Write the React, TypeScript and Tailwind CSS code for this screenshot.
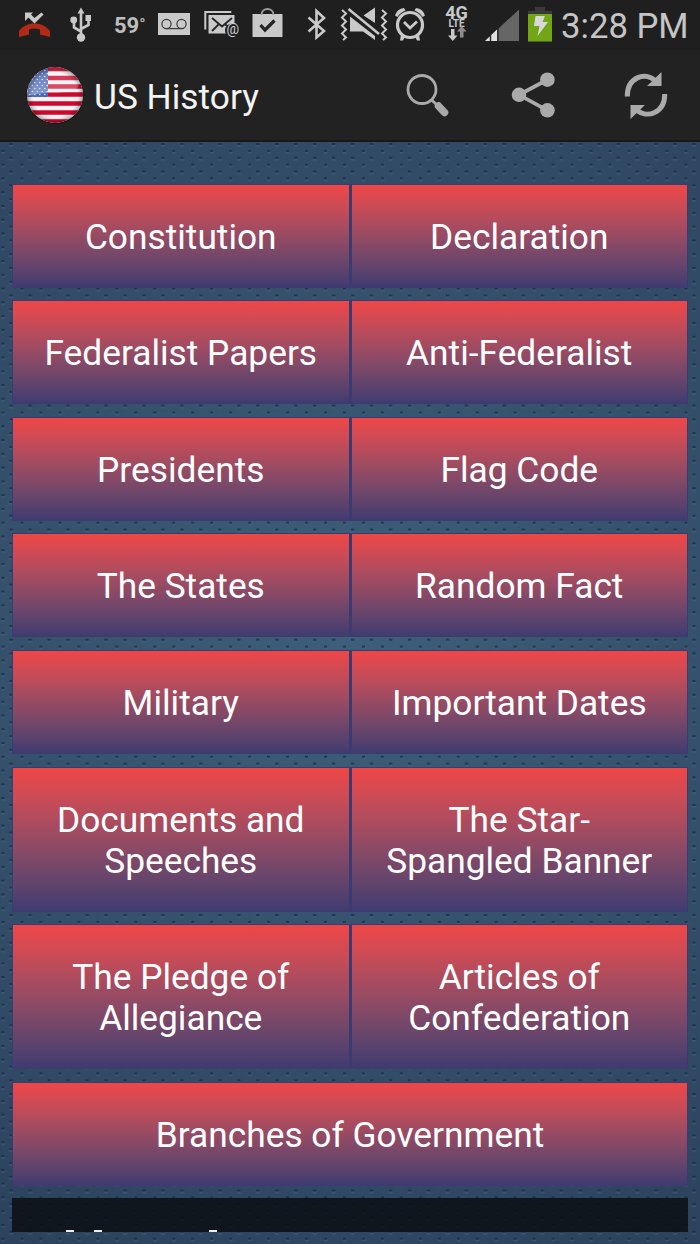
import React from 'react';

const ROWS = [
  { labels: ['Constitution', 'Declaration'], size: 'h-[104px] mb-[12px]' },
  { labels: ['Federalist Papers', 'Anti-Federalist'], size: 'h-[104px] mb-[13px]' },
  { labels: ['Presidents', 'Flag Code'], size: 'h-[104px] mb-[12px]' },
  { labels: ['The States', 'Random Fact'], size: 'h-[104px] mb-[13px]' },
  { labels: ['Military', 'Important Dates'], size: 'h-[104px] mb-[13px]' },
  { labels: ['Documents and\nSpeeches', 'The Star-\nSpangled Banner'], size: 'h-[145px] mb-[12px]' },
  { labels: ['The Pledge of\nAllegiance', 'Articles of\nConfederation'], size: 'h-[145px] mb-[13px]' },
  { labels: ['Branches of Government'], size: 'h-[104px] mb-[12px]' },
];

const StatusBar: React.FC = () => (
  <div className="h-[50px] bg-[#1f1f1f] flex pl-[16px] text-[#c5c5c5]">
    {/* missed call, usb */}
    <svg className="shrink-0" width="98" height="50" viewBox="16 0 98 50" fill="#c9c9c9">
      <path d="M19 37v-6c4-5 9-7.500 15.500-7.500s11.500 2.500 15.500 7.500v6l-10-2.500v-5q-5.500-2-11 0v5z" fill="#b22a17" />
      <path d="M25 12.500h8l-2 2 3.500 3.500 7-5.500 2 2-9 9-6-6-3.500 3.500z" />
      <path d="M81 12v25M81 31.500l-7-4v-8M81 29l7.500-4v-7" fill="none" stroke="#c9c9c9" strokeWidth="2.600" />
      <path d="M81 7.500l3.500 6h-7zM85.500 15h5.500v6h-5.500z" />
      <circle cx="73.700" cy="20" r="3.400" />
      <circle cx="81" cy="37.500" r="4.200" />
    </svg>
    <span className="w-[42px] shrink-0 pt-[13px] font-bold text-[22px] leading-[25px] text-[#bebebe] whitespace-nowrap">
      59<span className="text-[17px] leading-none font-normal align-[3px]">°</span>
    </span>
    {/* voicemail, mail */}
    <div className="relative shrink-0">
      <svg width="92" height="50" viewBox="156 0 92 50" fill="#c9c9c9">
        <rect x="158" y="13" width="32" height="22" />
        <g fill="none" stroke="#3a3a3a" strokeWidth="1.200">
          <circle cx="166.500" cy="24" r="4.600" />
          <circle cx="181.500" cy="24" r="4.600" />
          <path d="M166.500 28.600h15" />
        </g>
        <path d="M205.300 29.500v-17.500h26" fill="none" stroke="#c9c9c9" strokeWidth="2" />
        <path d="M208.500 15h26v18.500h-26z" />
        <path d="M212 18l10 8.500 10-8.500M212 31l7-7M225 24l5 5" fill="none" stroke="#252525" strokeWidth="1.800" />
        <circle cx="232" cy="30.500" r="7" fill="#1f1f1f" />
      </svg>
      <span className="absolute right-[9px] top-[21px] text-[14px] leading-[16px] text-[#d0d0d0]">@</span>
    </div>
    {/* store bag, bluetooth, muted, alarm */}
    <svg className="shrink-0" width="195" height="50" viewBox="248 0 195 50" fill="#c9c9c9">
      <path d="M252.500 14h30v23h-30z" />
      <path d="M261.500 15c0-8 12-8 12 0" fill="none" stroke="#9c9c9c" strokeWidth="2" />
      <path d="M260.500 25l4.500 5 9.500-9.500" fill="none" stroke="#252525" strokeWidth="3.300" />
      <path d="M308.500 17.500L324 31l-7.500 6.500V11l7.500 7L308.500 31.500" fill="none" stroke="#c9c9c9" strokeWidth="2.600" />
      <path d="M350 16.500l25 19.500v4l-12-8.500h-13zM363.500 15.500L375 7.500v15.500z" />
      <path d="M348.500 9L379 34" stroke="#c9c9c9" strokeWidth="2.500" />
      <path d="M342 10l4 3.500-4 4 4 4-4 4 4 4-4 4 4 4-3 2.500M382 10l4 3.500-4 4 4 4-4 4 4 4-4 4 4 4-3 2.500" fill="none" stroke="#c9c9c9" strokeWidth="2" />
      <circle cx="410" cy="25" r="12.500" fill="none" stroke="#c9c9c9" strokeWidth="3.200" />
      <path d="M404 22l6 6 7-6.500" fill="none" stroke="#c9c9c9" strokeWidth="2.800" />
      <path d="M395 15.500q2-7 9-7.500l1.500 2.500q-5.500 2-8 6.500zM425 15.500q-2-7-9-7.500l-1.500 2.500q5.500 2 8 6.500zM401 34.500l4 2-2 4h-3zM419 34.500l-4 2 2 4h3z" />
    </svg>
    <div className="w-[27px] shrink-0 flex flex-col items-center pt-[6px] font-bold text-[#c9c9c9]">
      <span className="text-[18px] leading-[14px]">4G</span>
      <span className="text-[10px] leading-[7px]">LTE</span>
      <svg className="-mt-px" width="20" height="16" viewBox="446 26 20 16" fill="#c9c9c9">
        <path d="M450 29h3.500v6.500h3l-4.700 5.500-4.800-5.500h3z" />
        <path d="M459 37.500v-6h-3l4.700-5.500 4.800 5.500h-3v6z" fill="#8d8d8d" />
      </svg>
    </div>
    {/* signal, battery */}
    <svg className="shrink-0" width="91" height="50" viewBox="470 0 91 50">
      <path d="M485 41l34-31.500v31.500z" fill="#666" />
      <path d="M485 41l12-11.500v11.500z" fill="#e0e0e0" />
      <path d="M490.500 35v6M498 28v13" stroke="#292929" strokeWidth="1.500" />
      <path d="M535 7h10v4h7v3h-24v-3h7z" fill="#393939" />
      <path d="M528 14h24v27.500h-24z" fill="#72a616" />
      <path d="M535.500 16h9.500l-2.500 6h5.500l-10.500 14 2-10h-5.500z" fill="#d8d8d8" />
    </svg>
    <span className="pt-[5px] text-[34.700px] leading-[42px] whitespace-nowrap">3:28 PM</span>
  </div>
);

const FlagIcon: React.FC = () => (
  <svg width="58" height="58" viewBox="0 0 58 58">
    <defs>
      <clipPath id="disc"><circle cx="29" cy="29" r="28" /></clipPath>
      <pattern id="stars" width="5" height="6" patternUnits="userSpaceOnUse">
        <circle cx="1.300" cy="1.500" r=".8" fill="#e5eaff" />
        <circle cx="3.800" cy="4.500" r=".8" fill="#e5eaff" />
      </pattern>
      <linearGradient id="shine" x1="0" y1="0" x2="0" y2="1">
        <stop offset="0" stopColor="#fff" stopOpacity=".1" />
        <stop offset="1" stopColor="#fff" stopOpacity=".35" />
      </linearGradient>
      <radialGradient id="rim">
        <stop offset=".8" stopColor="#000" stopOpacity="0" />
        <stop offset="1" stopColor="#000" stopOpacity=".3" />
      </radialGradient>
    </defs>
    <circle cx="29" cy="29.500" r="28.500" fill="#111" />
    <g clipPath="url(#disc)">
      <path d="M0 0h58v58H0z" fill="#f7f3f4" />
      <path d="M0 3h58M0 12h58M0 20.500h58M0 28.500h58M0 37.500h58M0 46.500h58M0 55.500h58" stroke="#cc0a30" strokeWidth="4.300" />
      <path d="M0 0h22v31H0z" fill="#4867b6" />
      <path d="M0 0h22v31H0z" fill="url(#stars)" />
      <path d="M0 0h50q6 11 2 21-5 6-30 6-12 0-22 4z" fill="url(#shine)" />
      <circle cx="29" cy="29" r="28" fill="url(#rim)" />
    </g>
  </svg>
);

const ActionBar: React.FC = () => (
  <div className="h-[92px] bg-[#222] border-b-2 border-[#181818] flex items-center pl-[26px]">
    <FlagIcon />
    <h1 className="ml-[10px] flex-1 text-[35.300px] leading-[42px] text-[#f3f3f3] whitespace-nowrap pt-[3px]">US History</h1>
    {/* search, share, refresh */}
    <svg className="shrink-0" width="310" height="90" viewBox="0 0 310 90" fill="#aaa">
      <circle cx="32" cy="39.500" r="14" fill="none" stroke="#aaa" strokeWidth="2.800" />
      <path d="M41 49.500l5 4.500" stroke="#aaa" strokeWidth="3" />
      <path d="M48.500 56l6 6.500" stroke="#aaa" strokeWidth="7.500" strokeLinecap="round" />
      <path d="M157.400 29.700L129 44.800l28.400 15.500" fill="none" stroke="#aaa" strokeWidth="3.800" />
      <circle cx="157.400" cy="29.700" r="7.300" />
      <circle cx="129" cy="44.800" r="7.300" />
      <circle cx="157.400" cy="60.300" r="7.300" />
      <path d="M237.300 46.500C237 27.500 255 21 265.500 31M274.700 44C275 63 257 69 246.500 60" fill="none" stroke="#aaa" strokeWidth="5" />
      <path d="M271.500 22v14h-14.500zM240.500 69v-14h14.500z" />
    </svg>
  </div>
);

const Backdrop: React.FC = () => (
  <svg className="absolute inset-0 -z-10" width="700" height="1104" viewBox="0 142 700 1104">
    <defs>
      <radialGradient id="glow" gradientUnits="userSpaceOnUse" cx="350" cy="640" r="700">
        <stop offset="0" stopColor="#3d5f7b" />
        <stop offset="1" stopColor="#2c425d" />
      </radialGradient>
      <pattern id="dimples" x="1.500" y="143" width="18.970" height="13.770" patternUnits="userSpaceOnUse">
        <rect x="8" y="0" width="3.400" height="2.200" fill="#1b2b42" />
        <rect x="7.700" y="2.200" width="4" height="1.200" fill="#466582" />
        <rect x="0" y="6.900" width="3" height="2.200" fill="#1b2b42" />
        <rect x="0" y="9.100" width="3.500" height="1.200" fill="#466582" />
      </pattern>
    </defs>
    <rect y="142" width="700" height="1104" fill="url(#glow)" />
    <rect y="142" width="700" height="1104" fill="url(#dimples)" opacity=".75" />
  </svg>
);

export default function App() {
  return (
    <div className="w-[700px] h-[1244px] overflow-hidden font-[Roboto,sans-serif] flex flex-col">
      <StatusBar />
      <ActionBar />
      <main className="relative isolate flex-1 px-[12px] pt-[42px]">
        <Backdrop />
        {ROWS.map((row) => (
          <div key={row.labels[0]} className={`flex gap-[3px] bg-[#3b3b70] pt-px px-px ${row.size}`}>
            {row.labels.map((label) => (
              <button
                key={label}
                className="flex-1 flex items-center justify-center whitespace-pre-line text-center text-[35.300px] leading-[41px] pt-[2px] text-white bg-linear-to-b from-[#f04646] to-[#3e3b70]"
              >
                {label}
              </button>
            ))}
          </div>
        ))}
        {/* tops of the next heading, cut off by the scroll edge */}
        <div className="h-[34px] bg-[#0b0e13]/85 flex items-end pl-[54px]">
          <div className="w-[8px] h-[2px] bg-[#eee]" />
          <div className="ml-[20px] w-[8px] h-[2px] bg-[#eee]" />
          <div className="ml-[107px] w-[8px] h-[2px] bg-[#eee]" />
        </div>
      </main>
    </div>
  );
}
